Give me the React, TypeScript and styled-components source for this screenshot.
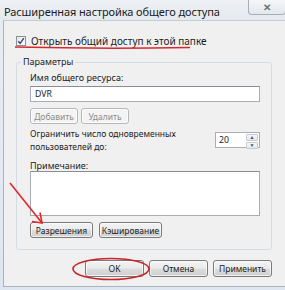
import React from "react";
import styled, { createGlobalStyle } from "styled-components";

const GlobalStyle = createGlobalStyle`
  html, body { margin: 0; padding: 0; background: #dfe8f2; }
  body { font-family: "Noto Sans", "Open Sans", sans-serif; }
`;

const Window = styled.div`
  position: relative;
  width: 285px;
  height: 290px;
  display: flex;
  flex-direction: column;
  background: linear-gradient(180deg, #e8edf3 0%, #dde6f1 100%);
  overflow: hidden;
  color: #1c1c1c;
  font-size: 8.7px;
`;

const TitleBar = styled.div`
  height: 20px;
  flex-shrink: 0;
  display: flex;
  align-items: flex-start;
  justify-content: space-between;
  background: linear-gradient(180deg, #eef1f4 0%, #e4e9ee 100%);
`;

const Title = styled.div`
  padding: 4px 0 0 4px;
  font-size: 11px;
  color: #1a1a1a;
  letter-spacing: -0.1px;
`;

const CloseButton = styled.div`
  width: 36px;
  height: 14px;
  margin-right: -1px;
  border: 1px solid #a7aeb6;
  border-top: none;
  border-radius: 0 0 4px 4px;
  background: linear-gradient(180deg, #f4f6f8 0%, #e3e8ed 100%);
  display: flex;
  align-items: center;
  justify-content: center;
  color: #6b7078;
  font-size: 10px;
  font-weight: bold;
  line-height: 1;
`;

const Body = styled.div`
  flex: 1;
  margin: 0 0 3px 3px;
  border-left: 1px solid #aab4c0;
  border-top: 1px solid #c4ccd6;
  border-bottom: 1px solid #aab4c0;
  background: #f0f0f0;
  padding: 14px 13px 0 12px;
  display: flex;
  flex-direction: column;
`;

const CheckRow = styled.label`
  display: flex;
  align-items: center;
  gap: 5px;
  height: 12px;
  font-size: 10px;
`;

const CheckBox = styled.span`
  width: 8px;
  height: 8px;
  border: 1px solid #8f8f8f;
  background: linear-gradient(135deg, #e6e6e6, #fdfdfd);
  display: flex;
  align-items: center;
  justify-content: center;
`;

const Group = styled.div`
  margin-top: 15px;
  padding: 0 11px 11px 13px;
  border: 1px solid #d5dce2;
  border-radius: 3px;
  display: flex;
  flex-direction: column;
`;

const Legend = styled.div`
  align-self: flex-start;
  margin: -7px 0 0 -9px;
  padding: 0 2px;
  background: #f0f0f0;
  line-height: 12px;
  font-size: 9px;
`;

const Label = styled.div<{ $top: number }>`
  margin-top: ${(p) => p.$top}px;
  line-height: 12px;
  font-size: 9px;
`;

const TextField = styled.div<{ $h: number; $top: number }>`
  height: ${(p) => p.$h}px;
  margin-top: ${(p) => p.$top}px;
  border: 1px solid #abadb3;
  border-top-color: #8a8d94;
  background: #fff;
  box-sizing: border-box;
  padding: 1px 4px;
  line-height: 13px;
`;

const Row = styled.div<{ $top: number; $gap: number }>`
  display: flex;
  align-items: center;
  gap: ${(p) => p.$gap}px;
  margin-top: ${(p) => p.$top}px;
`;

const Button = styled.div<{ $w: number; $disabled?: boolean; $h?: number }>`
  width: ${(p) => p.$w}px;
  height: ${(p) => p.$h ?? 16}px;
  box-sizing: border-box;
  border: 1px solid ${(p) => (p.$disabled ? "#b5b8bb" : "#7a7a7a")};
  border-radius: 3px;
  background: ${(p) =>
    p.$disabled
      ? "#f4f4f4"
      : "linear-gradient(180deg, #f3f3f3 0%, #ebebeb 48%, #dddddd 52%, #cfcfcf 100%)"};
  color: ${(p) => (p.$disabled ? "#8d8d8d" : "#1c1c1c")};
  display: flex;
  align-items: center;
  justify-content: center;
  font-size: 8.5px;
  box-shadow: inset 0 0 0 1px rgba(255, 255, 255, 0.7);
`;

const LimitRow = styled.div`
  display: flex;
  justify-content: space-between;
  align-items: flex-start;
  margin-top: 3px;
`;

const LimitText = styled.div`
  line-height: 13px;
  font-size: 8.5px;
`;

const Spin = styled.div`
  width: 45px;
  height: 16px;
  box-sizing: border-box;
  border: 1px solid #abadb3;
  background: #fff;
  display: flex;
  margin-top: 5px;
`;

const SpinValue = styled.div`
  flex: 1;
  padding-left: 3px;
  line-height: 14px;
`;

const SpinArrows = styled.div`
  width: 12px;
  margin: 1px;
  display: flex;
  flex-direction: column;
  gap: 1px;
`;

const SpinArrow = styled.div`
  flex: 1;
  border: 1px solid #c5cbd1;
  border-radius: 1px;
  background: linear-gradient(180deg, #f6f7f8, #e4e7ea);
  display: flex;
  align-items: center;
  justify-content: center;
  font-size: 5px;
  color: #4a5058;
  line-height: 1;
`;

const Footer = styled.div`
  display: flex;
  justify-content: flex-end;
  gap: 5px;
  margin-top: 10px;
`;

const Overlay = styled.svg`
  position: absolute;
  left: 0;
  top: 0;
  pointer-events: none;
`;

export default function App() {
  return (
    <>
      <GlobalStyle />
      <Window>
        <TitleBar>
          <Title>Расширенная настройка общего доступа</Title>
          <CloseButton>✕</CloseButton>
        </TitleBar>
        <Body>
          <CheckRow>
            <CheckBox>
              <svg width="8" height="8" viewBox="0 0 8 8">
                <path d="M1.2 4.2 L3.2 6.4 L6.8 1.2" fill="none" stroke="#2b4a8c" strokeWidth="1.4" />
              </svg>
            </CheckBox>
            Открыть общий доступ к этой папке
          </CheckRow>
          <Group>
            <Legend>Параметры</Legend>
            <Label $top={4}>Имя общего ресурса:</Label>
            <TextField $h={16} $top={2}>DVR</TextField>
            <Row $top={6} $gap={3}>
              <Button $w={48} $disabled>Добавить</Button>
              <Button $w={48} $disabled>Удалить</Button>
            </Row>
            <LimitRow>
              <LimitText>
                Ограничить число одновременных
                <br />
                пользователей до:
              </LimitText>
              <Spin>
                <SpinValue>20</SpinValue>
                <SpinArrows>
                  <SpinArrow>▲</SpinArrow>
                  <SpinArrow>▼</SpinArrow>
                </SpinArrows>
              </Spin>
            </LimitRow>
            <Label $top={7}>Примечание:</Label>
            <TextField $h={45} $top={-1} />
            <Row $top={6} $gap={6}>
              <Button $w={63}>Разрешения</Button>
              <Button $w={63}>Кэширование</Button>
            </Row>
          </Group>
          <Footer>
            <Button $w={59} $h={17}>OK</Button>
            <Button $w={59} $h={17}>Отмена</Button>
            <Button $w={59} $h={17}>Применить</Button>
          </Footer>
        </Body>
        <Overlay width="285" height="290" viewBox="0 0 285 290">
          <path d="M15 47 Q100 49 190 47.5" fill="none" stroke="#d42a2e" strokeWidth="1.5" />
          <path d="M10 183 L42 223" stroke="#e0282c" strokeWidth="1.6" fill="none" />
          <path d="M32 221.5 L42 223 L40 212.5" stroke="#e0282c" strokeWidth="1.6" fill="none" />
          <ellipse cx="111" cy="269" rx="38" ry="10.5" fill="none" stroke="#c8242a" strokeWidth="1.6" />
        </Overlay>
      </Window>
    </>
  );
}
